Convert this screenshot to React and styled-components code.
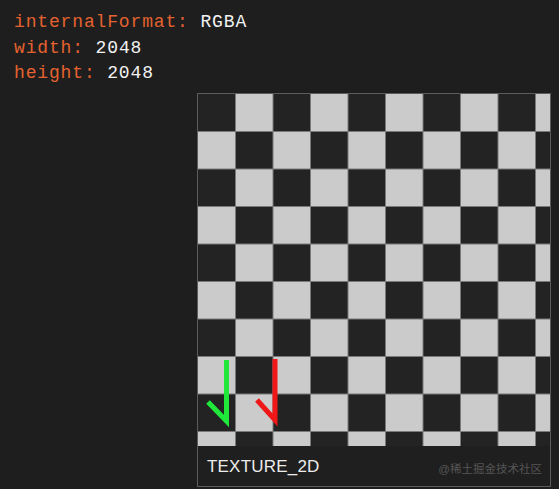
import React from 'react'
import styled, { createGlobalStyle } from 'styled-components'

const GlobalStyle = createGlobalStyle`
  html, body {
    margin: 0;
    padding: 0;
    background: #1e1e1e;
  }
`

const Page = styled.div`
  width: 559px;
  height: 489px;
  background: #1e1e1e;
  overflow: hidden;
  padding-top: 10px;
  box-sizing: border-box;
`

const Info = styled.div`
  padding-left: 14px;
  font-family: "Liberation Mono", "DejaVu Sans Mono", monospace;
  font-size: 18px;
  letter-spacing: 0.85px;
  line-height: 25.5px;
`

const Line = styled.div`
  white-space: pre;
`

const Key = styled.span`
  color: #e4622f;
`

const Value = styled.span`
  color: #f2f2f2;
`

const Panel = styled.div`
  margin-top: 6px;
  margin-left: 197px;
  width: 354px;
  border: 1px solid #5c5c5c;
  box-sizing: border-box;
  display: flex;
  flex-direction: column;
`

const Texture = styled.svg`
  display: block;
  width: 352px;
  height: 352px;
`

const Caption = styled.div`
  height: 40px;
  display: flex;
  align-items: center;
  justify-content: space-between;
  padding: 0 8px 0 9px;
  background: #1f1f1f;
`

const Label = styled.span`
  font-family: "Liberation Sans", Arial, sans-serif;
  font-size: 17px;
  letter-spacing: 0.2px;
  color: #ececec;
  padding-top: 2px;
`

const Mark = styled.span`
  font-family: "Liberation Sans", "Noto Sans CJK SC", sans-serif;
  font-size: 11.5px;
  color: #555;
  padding-top: 4px;
`

const CELL = 37.5

const Checker = () => {
  const cells = []
  for (let r = 0; r < 10; r++) {
    for (let c = 0; c < 10; c++) {
      const light = (r + c) % 2 === 1
      cells.push(
        <rect
          key={r + '-' + c}
          x={c * CELL}
          y={r * CELL}
          width={CELL}
          height={CELL}
          fill={light ? '#cbcbcb' : '#232323'}
        />
      )
    }
  }
  const lines = []
  for (let i = 1; i < 10; i++) {
    lines.push(<line key={'v' + i} x1={i * CELL} y1={0} x2={i * CELL} y2={352} />)
    lines.push(<line key={'h' + i} x1={0} y1={i * CELL} x2={352} y2={i * CELL} />)
  }
  return (
    <Texture viewBox="0 0 352 352">
      {cells}
      <g stroke="#7a7a7a" strokeWidth="1">{lines}</g>
      <polyline points="28.5,266 28.5,327 10,308" fill="none" stroke="#1fe83a" strokeWidth="5" strokeLinejoin="miter" />
      <polyline points="77,265 77,326 59,306" fill="none" stroke="#ef1717" strokeWidth="5" strokeLinejoin="miter" />
    </Texture>
  )
}

const App = () => {
  return (
    <Page>
      <GlobalStyle />
      <Info>
        <Line><Key>internalFormat:</Key> <Value>RGBA</Value></Line>
        <Line><Key>width:</Key> <Value>2048</Value></Line>
        <Line><Key>height:</Key> <Value>2048</Value></Line>
      </Info>
      <Panel>
        <Checker />
        <Caption>
          <Label>TEXTURE_2D</Label>
          <Mark>@稀土掘金技术社区</Mark>
        </Caption>
      </Panel>
    </Page>
  )
}

export default App
